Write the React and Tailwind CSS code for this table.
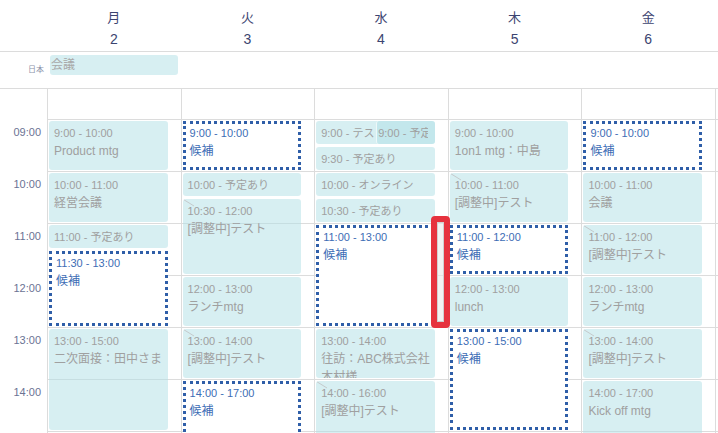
import React from "react";

const HOUR = 52;
const toMin = (s) => {
    const [h, m] = s.split(":").map(Number);
    return h * 60 + m;
};
const pos = (s, e) => {
    const a = toMin(s), b = toMin(e);
    return { top: 30 + ((a - 540) * HOUR) / 60 + 2, height: ((b - a) * HOUR) / 60 - 3 };
};

const days = [
    {
        name: "月", num: 2, events: [
            { s: "9:00", e: "10:00", t: "Product mtg" },
            { s: "10:00", e: "11:00", t: "経営会議" },
            { s: "11:00", e: "11:30", t: "予定あり", short: true },
            { s: "11:30", e: "13:00", cand: true },
            { s: "13:00", e: "15:00", t: "二次面接：田中さま" },
            { s: "15:00", e: "17:00", cand: true },
        ]
    },
    {
        name: "火", num: 3, events: [
            { s: "9:00", e: "10:00", cand: true },
            { s: "10:00", e: "10:30", t: "予定あり", short: true },
            { s: "10:30", e: "12:00", t: "[調整中]テスト", corner: true },
            { s: "12:00", e: "13:00", t: "ランチmtg" },
            { s: "13:00", e: "14:00", t: "[調整中]テスト", corner: true },
            { s: "14:00", e: "17:00", cand: true },
        ]
    },
    {
        name: "水", num: 4, events: [
            { s: "9:00", e: "9:30", t: "テスト", short: true, clip: "w-[54px]" },
            { s: "9:00", e: "9:30", t: "予定あり", short: true, over: true, clip: "w-[50px]" },
            { s: "9:30", e: "10:00", t: "予定あり", short: true },
            { s: "10:00", e: "10:30", t: "オンライン", short: true },
            { s: "10:30", e: "11:00", t: "予定あり", short: true },
            { s: "11:00", e: "13:00", cand: true },
            { s: "13:00", e: "14:00", t: "往訪：ABC株式会社 木村様" },
            { s: "14:00", e: "16:00", t: "[調整中]テスト", corner: true },
        ]
    },
    {
        name: "木", num: 5, events: [
            { s: "9:00", e: "10:00", t: "1on1 mtg：中島" },
            { s: "10:00", e: "11:00", t: "[調整中]テスト", corner: true },
            { s: "11:00", e: "12:00", cand: true },
            { s: "12:00", e: "13:00", t: "lunch" },
            { s: "13:00", e: "15:00", cand: true },
        ]
    },
    {
        name: "金", num: 6, events: [
            { s: "9:00", e: "10:00", cand: true },
            { s: "10:00", e: "11:00", t: "会議" },
            { s: "11:00", e: "12:00", t: "[調整中]テスト", corner: true },
            { s: "12:00", e: "13:00", t: "ランチmtg" },
            { s: "13:00", e: "14:00", t: "[調整中]テスト", corner: true },
            { s: "14:00", e: "17:00", t: "Kick off mtg" },
        ]
    },
];

const hours = ["09:00", "10:00", "11:00", "12:00", "13:00", "14:00", "15:00"];

function Event({ ev }) {
    const style = pos(ev.s, ev.e);
    if (ev.cand) {
        return (
            <div className="absolute left-[1px] right-[13px] overflow-hidden border-[3px] border-dotted border-[#2f5ea8] bg-white px-[4px] pt-[2px] text-[#3d6db5]" style={style}>
                <div className="text-[11px] leading-[14px] whitespace-nowrap">{ev.s} - {ev.e}</div>
                <div className="mt-[2px] text-[12px] leading-[18px]">候補</div>
            </div>
        );
    }
    const box = ev.over
        ? "left-[61px] border-l border-white/70 pl-[1px]"
        : "left-[1px] pl-[5px]";
    return (
        <div className={`absolute ${box} right-[13px] overflow-hidden rounded-[3px] bg-[#b0e0e6]/50 pt-[5px] text-[#a0a0a0]`} style={style}>
            {ev.corner && (
                <svg className="absolute left-0 top-0" width="12" height="8" viewBox="0 0 12 8">
                    <line x1="0.5" y1="0.5" x2="11" y2="7" stroke="#c4c9cb" strokeWidth="1" />
                </svg>
            )}
            {ev.short ? (
                <div className={`text-[11px] leading-[14px] whitespace-nowrap ${ev.clip ? `${ev.clip} overflow-hidden` : ""}`}>{ev.s} - {ev.t}</div>
            ) : (
                <>
                    <div className="text-[11px] leading-[14px] whitespace-nowrap">{ev.s} - {ev.e}</div>
                    <div className="mt-[2px] text-[12px] leading-[18px]">{ev.t}</div>
                </>
            )}
        </div>
    );
}

function Lines() {
    return (
        <>
            <div className="h-[30px]" />
            {hours.map(h => <div key={h} className="h-[52px] border-t border-[#dcdcdc]" />)}
        </>
    );
}

export default function App() {
    return (
        <div className="h-[433px] w-[718px] overflow-hidden bg-white font-['Liberation_Sans','Noto_Sans_CJK_JP',sans-serif]">
            {/* header */}
            <div className="flex h-[52px] border-b border-[#dcdcdc]">
                <div className="w-[47px]" />
                {days.map(d => (
                    <div key={d.name} className="flex flex-1 flex-col items-center pt-[8px] text-[#3c4470]">
                        <div className="text-[13px] leading-[20px]">{d.name}</div>
                        <div className="mt-[1px] text-[14px] leading-[20px]">{d.num}</div>
                    </div>
                ))}
                <div className="w-[3px]" />
            </div>
            {/* all day */}
            <div className="flex h-[37px] border-b border-[#dcdcdc]">
                <div className="w-[47px] pr-[3px] pt-[12px] text-right text-[8px] leading-[12px] text-[#8c92aa]">日本</div>
                <div className="flex-1 pt-[3px]">
                    <div className="ml-[3px] h-[20px] w-[128px] rounded-[3px] bg-[#b0e0e6]/50 pl-[1px] text-[12px] leading-[20px] text-[#a8a8a8]">会議</div>
                </div>
            </div>
            {/* body */}
            <div className="relative flex h-[344px] overflow-hidden">
                <div className="w-[47px] shrink-0">
                    <div className="h-[30px]" />
                    {hours.map(h => (
                        <div key={h} className="h-[52px] pr-[6px] pt-[6px] text-right text-[11px] leading-[14px] text-[#6b7394]">{h}</div>
                    ))}
                </div>
                {days.map(d => (
                    <div key={d.name} className="relative flex-1 border-l border-[#dcdcdc]">
                        <Lines />
                        {d.events.map((ev, i) => <Event key={i} ev={ev} />)}
                    </div>
                ))}
                <div className="w-[3px] shrink-0 border-l border-[#dcdcdc]">
                    <Lines />
                </div>
                <div className="absolute left-[431px] top-[127px] h-[112px] w-[19px] rounded-[4px] border-[6px] border-[#e6323e] bg-[#e9e9e9]/60 shadow-[inset_0_0_0_1px_#d0d0d0]" />
            </div>
        </div>
    );
}
